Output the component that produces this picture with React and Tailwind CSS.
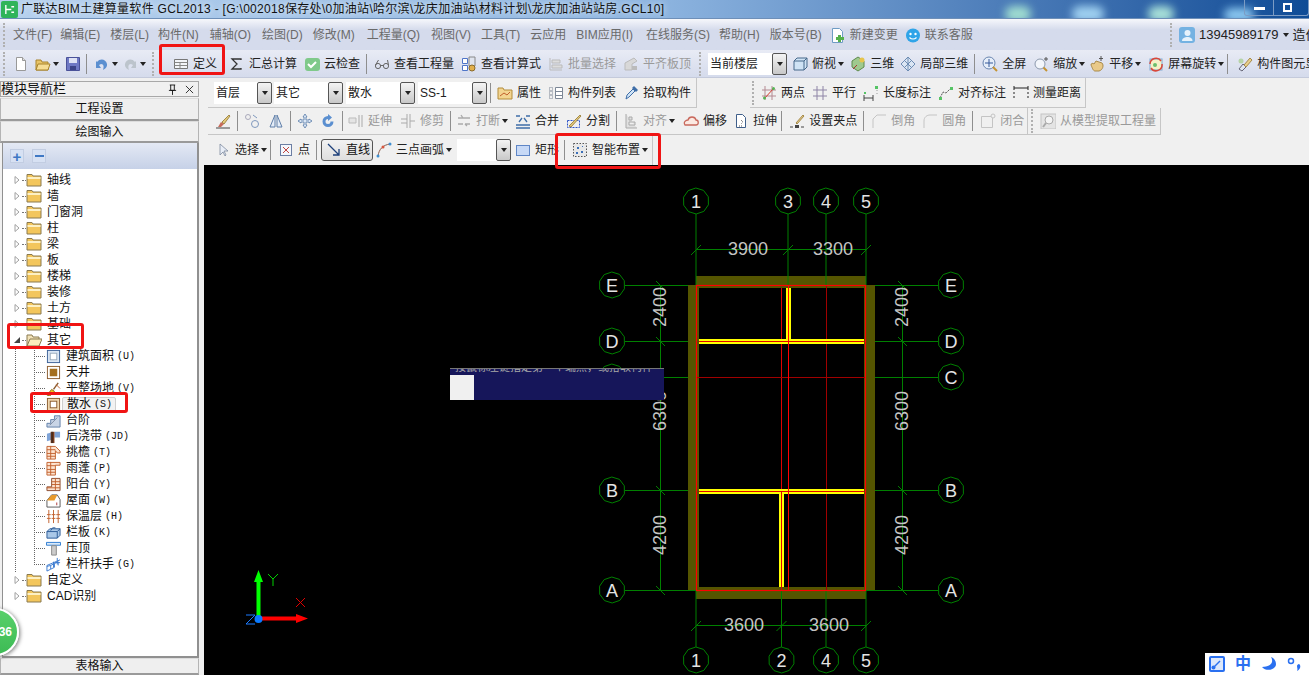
import React from 'react';

const icons = {
  doc: <><path d="M3.500 1.500h6l3 3v10h-9z" fill="#fff" stroke="#999" /><path d="M9.500 1.500v3h3" fill="#ddd" stroke="#999" /></>,
  open: <><path d="M1 4h5l1 2h6v8H1z" fill="#e8c468" stroke="#a8842c" /><path d="M3 8h12l-2 6H1z" fill="#f6dd94" stroke="#a8842c" /></>,
  save: <><path d="M1.500 1.500h13v13h-13z" fill="#6e78c4" stroke="#4a5299" /><path d="M4 2h8v5H4z" fill="#dfe3f5" /><path d="M5 10h6v4H5z" fill="#3c4488" /></>,
  undo: <path d="M3 6c3-4 9-3 10 2 .5 3-2 5-4 6 1-3 1-6-2-6l-2 1 2 3H2V5z" fill="#5b8fd0" />,
  redo: <path d="M13 6c-3-4-9-3-10 2-.5 3 2 5 4 6-1-3-1-6 2-6l2 1-2 3h5V5z" fill="#bcc4cc" />,
  define: <><path d="M1.500 3.500h13v9h-13z" fill="#f3f5fa" stroke="#777" /><path d="M1.500 6.500h13M1.500 9.500h13M7 6.500v6" stroke="#888" fill="none" /></>,
  sigma: <path d="M12 4V3H3l5 5-5 5h9v-1" fill="none" stroke="#333" strokeWidth="1.300" />,
  cloudok: <><rect x="1" y="2" width="15" height="13" rx="3" fill="#7fc98a" /><path d="M4 8l3 3 5-5" fill="none" stroke="#fff" strokeWidth="2" /></>,
  glasses: <><circle cx="4" cy="10" r="2.600" fill="none" stroke="#666" /><circle cx="12" cy="10" r="2.600" fill="none" stroke="#666" /><path d="M6.500 9.500h3M1.500 9l3-5M14.500 9l-1-5" fill="none" stroke="#666" /></>,
  calc: <><path d="M1.500 2.500h5v5h-5zM1.500 9.500h5v5h-5z" fill="#fff" stroke="#4f75c8" /><path d="M8 1h6v9H8z" fill="#dfe4ee" stroke="#888" /><circle cx="11" cy="12" r="3" fill="#e2b04c" stroke="#8a6a2a" /></>,
  batch: <><path d="M2 2v12h12" fill="none" stroke="#bbb" /><path d="M4 4h8v3H4zM4 9h10v3H4z" fill="#ddd" stroke="#bbb" /></>,
  flush: <><path d="M2 14V7l9-5 3 3-5 3v6z" fill="#d8d8d8" stroke="#bbb" /><path d="M9 10h5v4H9z" fill="#bbb" /></>,
  cube: <><path d="M2 5l3-3h10v9l-3 3H2z" fill="#cfe3f5" stroke="#46688a" /><path d="M2 5h10v9M12 5l3-3" fill="none" stroke="#46688a" /></>,
  three: <><path d="M8 1l6 4v6l-6 4-6-4V5z" fill="#9fc98e" stroke="#5e8a4c" /><circle cx="12" cy="4" r="2.500" fill="#e6c44c" /><path d="M3 13l4-4" stroke="#a33" /></>,
  part: <><path d="M8 1l7 7-7 7-7-7z" fill="#dbe6f4" stroke="#6d8cb3" /><path d="M4.500 4.500l7 7M11.500 4.500l-7 7M8 1v14" stroke="#6d8cb3" fill="none" /></>,
  full: <><circle cx="7" cy="7" r="6" fill="#e6eef9" stroke="#6a86b0" /><path d="M7 3v8M3 7h8" stroke="#35589a" /><path d="M11 11l4 4" stroke="#c49332" strokeWidth="2" /></>,
  zoom: <><circle cx="7" cy="8" r="5" fill="#f3f6fb" stroke="#8c99ad" /><path d="M10.500 11.500l3.500 3.500" stroke="#c49332" strokeWidth="2" /><path d="M13 1v4M11 3h4" stroke="#555" /></>,
  pan: <><path d="M2 9c0-2 2-2 3-1l2-3 6 2c2 2 1 7-3 8H6C4 15 3 11 2 9z" fill="#e9c988" stroke="#a98a4a" /><path d="M12 0v5M10 2.500h4" stroke="#555" /></>,
  rotate: <><rect x="2" y="3" width="12" height="11" fill="#f6f1c8" stroke="#7faad4" /><path d="M2 8a6 6 0 0 1 11-3M14 8a6 6 0 0 1-11 4" fill="none" stroke="#d9473a" strokeWidth="1.500" /><circle cx="7" cy="9" r="2" fill="#6cbf6c" /></>,
  brushb: <><path d="M3 14l3-5 3 2-3 3z" fill="#c76b5a" /><path d="M7 9l7-7 1 1-6 8z" fill="#e3c97b" stroke="#a38a4a" /><path d="M1 15h14" stroke="#444" /></>,
  prop: <><path d="M1 3h5l1 2h8v9H1z" fill="#f3d590" stroke="#b38c3b" /><path d="M3 11l4-3 3 2 3-3" stroke="#c1602d" fill="none" /></>,
  list: <><path d="M1.500 2.500h3v3h-3zM1.500 6.500h3v3h-3zM1.500 10.500h3v3h-3z" fill="none" stroke="#7c8796" strokeDasharray="1 1" /><path d="M7.500 2.500h7v11h-7zM7.500 6.500h7M7.500 10.500h7" fill="#fff" stroke="#7c8796" /></>,
  pick: <><path d="M3 14l1-4 6-6 2 2-6 6z" fill="#cfe3f6" stroke="#3f6ea8" /><path d="M9 3l2-2 4 4-2 2z" fill="#3f6ea8" /></>,
  two: <><path d="M4 1v14M11 1v14M1 5h14M1 11h14" stroke="#b48a92" fill="none" /><path d="M3 14L13 3" stroke="#d43a2c" /><circle cx="3.500" cy="13" r="1.500" fill="#55b455" /><circle cx="12.500" cy="3.500" r="1.500" fill="#55b455" /></>,
  par: <path d="M5 1v14M11 1v14M1 5h14M1 11h14" stroke="#8e84a6" fill="none" />,
  lendim: <><path d="M1 13h9M1 10v6M10 10v6" stroke="#444" fill="none" /><path d="M14 2v9" stroke="#999" strokeDasharray="1 2" /><rect x="12" y="1" width="3" height="3" fill="#55c465" /><rect x="1" y="7" width="2" height="2" fill="#55c465" /></>,
  aligndim: <><path d="M2 13l3-6 3 1 5-5" stroke="#555" fill="none" strokeDasharray="2 1" /><rect x="1" y="12" width="3" height="3" fill="#55c465" /><rect x="12" y="2" width="3" height="3" fill="#55c465" /></>,
  measure: <><path d="M1 3h14M1 1v4M15 1v4" stroke="#222" fill="none" /><path d="M1 7v8M15 7v8" stroke="#222" strokeDasharray="2 2" /></>,
  circles: <><circle cx="4" cy="4" r="2.500" fill="none" stroke="#aab" /><circle cx="11" cy="11" r="3.500" fill="none" stroke="#7f98bd" /><path d="M9 2l4 3" stroke="#7f98bd" /></>,
  mirror: <path d="M7 2L2 14h5zM9 2l5 12H9z" fill="#e4ecf7" stroke="#5f7ea8" />,
  move: <path d="M8 1l2 3H9v3h3V6l3 2-3 2V9H9v3h1l-2 3-2-3h1V9H4v1L1 8l3-2v1h3V4H6z" fill="#dbe6f4" stroke="#587ba8" strokeWidth=".8" />,
  spin: <path d="M8 3a5.500 5.500 0 1 0 5.500 5.500h-3A2.500 2.500 0 1 1 8 6v2l4-3.500L8 1z" fill="#5b8fd0" />,
  extend: <><path d="M1 5h7v5H1z" fill="#e4e4e4" stroke="#bbb" /><path d="M11 2v12M14 2v12" stroke="#aaa" /></>,
  trim: <path d="M7 1v14M10 1v14M1 6h6M1 10h6M10 8h5" stroke="#aaa" fill="none" />,
  brk: <path d="M2 5h12M2 11h5M9 11h5M5 2l2 3M11 13l-2-2" stroke="#aaa" fill="none" strokeWidth="1.300" />,
  merge: <path d="M1 12h14M1 15h14M4 9l3-4M12 9L9 5M1 3h4M11 3h4" stroke="#3f6ea8" fill="none" strokeWidth="1.300" />,
  split: <><path d="M1.500 7.500h12v7h-12z" fill="none" stroke="#2c53c8" strokeDasharray="2 1" /><path d="M3 13L14 2l1 1L5 14z" fill="#e3c97b" stroke="#a38a4a" /></>,
  align: <path d="M3 1v14h11M6 4h3v3H6zM6 9h6v3H6z" fill="#e0e0e0" stroke="#aaa" />,
  offset: <path d="M2 12c-2-3 1-5 3-5 1-4 7-4 8 0 3 0 3 5 0 5z" fill="#fbe9e2" stroke="#c8685c" strokeWidth="1.300" />,
  stretch: <><path d="M3.500 1.500h6l3 3v10h-9z" fill="#fff" stroke="#3f5f8a" /><path d="M8 7l2 2-2 2M6 13h4" stroke="#555" fill="none" strokeDasharray="1 1" /></>,
  grip: <><path d="M1 14h3M12 14h3" stroke="#444" /><rect x="6" y="12" width="4" height="3" fill="#444" /><path d="M7 10l7-8 1 1-7 8z" fill="#e9cf8a" stroke="#a58a4c" /></>,
  chamfer: <path d="M2 15V6l4-4h9" fill="none" stroke="#c4c4c4" />,
  round: <path d="M2 15V8c0-4 3-6 6-6h7" fill="none" stroke="#c4c4c4" />,
  close: <><path d="M1.500 3.500h11v11h-11z" fill="none" stroke="#c4c4c4" /><circle cx="13" cy="3" r="2" fill="#f0f0f0" stroke="#c4c4c4" /></>,
  model: <><rect x="1" y="1" width="15" height="15" fill="#e4e4e4" stroke="#c4c4c4" /><circle cx="9" cy="7" r="4" fill="#f4f4f4" stroke="#aaa" /><path d="M6 10l-3 4" stroke="#aaa" strokeWidth="2" /></>,
  arrow: <path d="M5 2v11l3-3 2 4 1-1-2-4h4z" fill="#e9eef7" stroke="#7d8aa0" strokeWidth=".8" />,
  point: <><rect x="2.500" y="2.500" width="11" height="11" fill="#f4f7fc" stroke="#6c7ea3" /><path d="M5 5l6 6M11 5l-6 6" stroke="#c0453f" /></>,
  line: <path d="M2 2l11 11M13 7v6H7" fill="none" stroke="#1c3f7a" strokeWidth="1.300" />,
  arc: <><path d="M2 14C3 7 7 3 14 2" fill="none" stroke="#8a5a4a" /><circle cx="2" cy="14" r="1.500" fill="#3f8fd0" /><circle cx="7" cy="5" r="1.500" fill="#d8563f" /><circle cx="14" cy="2" r="1.500" fill="#3f8fd0" /></>,
  rect: <rect x="1.500" y="3.500" width="13" height="10" fill="#c7d9f6" stroke="#5f86c6" />,
  smart: <><rect x="1.500" y="1.500" width="13" height="13" fill="#e8e8e8" stroke="#555" strokeDasharray="1.500 1.500" /><path d="M5 5h2v2H5zM10 4h1v1h-1zM9 9h2v2H9zM4 10h2v2H4z" fill="#3b6fb8" /></>,
  newdoc: <><path d="M3.500 1.500h7l3 3v11h-10z" fill="#fff" stroke="#6f9cc4" /><path d="M9 8h3v2h3v3h-3v2H9v-2H7v-3h2z" fill="#54b04a" /></>,
  smile: <><circle cx="8" cy="8.500" r="7" fill="#2fa4e8" /><circle cx="5.500" cy="7" r="1.200" fill="#fff" /><circle cx="10.500" cy="7" r="1.200" fill="#fff" /><path d="M4.500 10.500c2 2 5 2 7 0" stroke="#fff" fill="none" strokeWidth="1.200" /></>,
  user: <><rect x="0" y="0" width="16" height="16" rx="3" fill="#74b2e2" /><circle cx="8.500" cy="6" r="3" fill="#e6f2fb" /><path d="M3 14c0-3 3-4 5.500-4s5 1 5 4z" fill="#e6f2fb" /></>,
  element: <><path d="M2 13l4-5 3 3-4 4z" fill="#dfe5ef" stroke="#667" /><path d="M7 9l6-7 2 2-6 7z" fill="#e9cf8a" stroke="#a58a4c" /><circle cx="4" cy="5" r="2.500" fill="#b6d4a8" /></>,
  area: <><rect x="1.500" y="1.500" width="13" height="13" fill="#dbe6f4" stroke="#3a5f96" /><rect x="4.500" y="4.500" width="7" height="7" fill="#fff" stroke="#9ab" /></>,
  well: <><rect x="1.500" y="1.500" width="13" height="13" fill="#fff" stroke="#8a5a2c" /><rect x="4" y="4" width="8" height="8" fill="#a46e1e" /></>,
  level: <><path d="M1 15l5-6 3 2-5 5z" fill="#f2c21c" stroke="#8a6a10" /><path d="M8 9l5-7" stroke="#8a5a2c" strokeWidth="1.500" /><path d="M11 4l4 4" stroke="#c1602d" /></>,
  apron: <><rect x="1.500" y="1.500" width="13" height="13" fill="#f0d8b0" stroke="#8a5a2c" /><rect x="4.500" y="4.500" width="7" height="7" fill="#fff" stroke="#8a5a2c" /></>,
  step: <><path d="M1 15V11h4V7h4V3h6v12z" fill="#c8d4e6" stroke="#5f7ea8" /><path d="M4 13l8-8" stroke="#7d8aa0" /></>,
  band: <><path d="M1 5l7-2v8l-7 2zM9 3h6v6H9z" fill="#7fa4d8" /><path d="M5 3h4v12H5z" fill="#7a3a1c" /><path d="M6 3h1v12H6z" fill="#222" /></>,
  eaves: <><path d="M1 1.500h9l5 5v2h-3L10 6v9H1z" fill="#fde3cf" stroke="#c1602d" /><path d="M1 5h9M1 9h9M1 12h9M5 1v14" stroke="#c1602d" /></>,
  canopy: <><path d="M1 1.500h14v3h-5V15H1z" fill="#fde3cf" stroke="#c1602d" /><path d="M1 5h9M1 9h9M1 12h9M5 1v14" stroke="#c1602d" /></>,
  balcony: <><path d="M6 1.500h9v13H1v-4h5z" fill="#fde3cf" stroke="#8a4a2c" /><path d="M6 5h9M6 8h9M1 11.500h14M10 1v13" stroke="#c1602d" /></>,
  roof: <><path d="M1 15V8l5-6h6l3 5v8z" fill="#fff" stroke="#555" /><path d="M1 8l5-6h6l-3 6z" fill="#e89a2c" /><path d="M11 10h1v3h-1z" fill="#a33" /></>,
  insul: <path d="M3 1v14M8 1v14M13 1v14M1 6h4M6 6h4M11 6h4M1 10h4M6 10h4M11 10h4" stroke="#c1602d" fill="none" />,
  panel: <><path d="M1 7l3-3h11v7l-3 3H1z" fill="#aac8e8" stroke="#2a5a96" /><path d="M1 7h11v7M12 7l3-3M5 6l2-3h3" fill="none" stroke="#2a5a96" /></>,
  coping: <><path d="M.5 1.500h15v3H.5z" fill="#dbe9f8" stroke="#2a7ad0" /><path d="M6 5h5v10H6z" fill="#ccc" stroke="#888" /></>,
  rail: <path d="M1 15V9l14-6M1 10l4-1v4l-4 2M5 9l4-2v4l-4 2M9 7l4-2v4M12 1v7M8 5v6M15 6H9" stroke="#3a7ad0" fill="none" />,
};

const Icon = ({ name, className = 'w-4 h-4' }) => (
  <svg viewBox="0 0 16 16" className={`${className} shrink-0`}>{icons[name]}</svg>
);

const Caret = ({ className = '' }) => (
  <span className={`${className} w-0 h-0 border-x-[3.5px] border-x-transparent border-t-[4px] border-t-[#222] shrink-0`} />
);

const Tool = ({ icon, label, caret, dim, className = 'ml-[7px]' }) => (
  <div className={`${className} flex items-center gap-1 shrink-0 ${dim ? 'text-[#9a9a9a]' : 'text-[#222]'}`}>
    <Icon name={icon} />
    {label && <span className="whitespace-nowrap">{label}</span>}
    {caret && <Caret className="-ml-[2px]" />}
  </div>
);

const Sep = ({ className = 'ml-[6px]' }) => <div className={`${className} w-px h-[20px] bg-[#8e8e8e] shrink-0`} />;

const Grip = ({ className = '' }) => <div className={`${className} h-[24px] border-l-2 border-dotted border-[#b0b0b0] shrink-0`} />;

const Select = ({ label, className }) => (
  <div className={`${className} h-[22px] flex bg-white shrink-0`}>
    <span className="flex-1 pl-[2px] text-[12px] leading-[22px] text-[#222] whitespace-nowrap">{label}</span>
    <span className="w-[15px] flex items-center justify-center border border-[#555] rounded-[2px] bg-gradient-to-b from-[#f4f4f4] to-[#c8c8c8]">
      <Caret />
    </span>
  </div>
);

const SideButton = ({ children, className = '' }) => (
  <div className={`${className} flex items-center justify-center bg-[#efefef] border-x border-b-2 border-t border-x-[#b4b4b4] border-t-[#dcdcdc] border-b-[#9a9a9a] text-[12px] text-[#111]`}>
    {children}
  </div>
);

const folders = ['轴线', '墙', '门窗洞', '柱', '梁', '板', '楼梯', '装修', '土方', '基础'];

const leaves = [
  ['area', '建筑面积', '(U)'],
  ['well', '天井', ''],
  ['level', '平整场地', '(V)'],
  ['apron', '散水', '(S)'],
  ['step', '台阶', ''],
  ['band', '后浇带', '(JD)'],
  ['eaves', '挑檐', '(T)'],
  ['canopy', '雨蓬', '(P)'],
  ['balcony', '阳台', '(Y)'],
  ['roof', '屋面', '(W)'],
  ['insul', '保温层', '(H)'],
  ['panel', '栏板', '(K)'],
  ['coping', '压顶', ''],
  ['rail', '栏杆扶手', '(G)'],
];

const Folder = ({ open }) => (
  <svg viewBox="0 0 16 16" className="w-4 h-4 shrink-0">
    {open ? (
      <>
        <path d="M1 3h5l1 2h6v9H1z" fill="#f2e2b8" stroke="#8a7a50" />
        <path d="M4 7h12l-3 7H1z" fill="#fbeebd" stroke="#8a7a50" />
      </>
    ) : (
      <>
        <path d="M1 2.500h5l1 1.500h8v10H1z" fill="#f3c65c" stroke="#8a7a50" />
        <path d="M1.500 5h13v2h-13z" fill="#fdf0c4" />
      </>
    )}
  </svg>
);

const FolderRow = ({ label, open }) => (
  <div className="h-4 flex items-center text-[12px] text-[#111]">
    <span className="w-[10px] flex justify-center shrink-0">
      {open ? (
        <svg viewBox="0 0 8 8" className="w-2 h-2"><path d="M7 1v6H1z" fill="#444" /></svg>
      ) : (
        <svg viewBox="0 0 8 8" className="w-2 h-2"><path d="M2 .5l4 3.500-4 3.500z" fill="#fff" stroke="#a0a0a0" /></svg>
      )}
    </span>
    <span className="w-[4px] border-t border-dotted border-[#777] shrink-0" />
    <Folder open={open} />
    <span className="ml-[5px] whitespace-nowrap">{label}</span>
  </div>
);

const LeafRow = ({ icon, label, hot, last }) => (
  <div className="h-4 flex items-center text-[12px] text-[#111]">
    <svg viewBox="0 0 12 16" className="w-[12px] h-4 shrink-0">
      <path d={last ? 'M.5 0V8M0 8.500H12' : 'M.5 0V16M0 8.500H12'} stroke="#666" strokeDasharray="1 1" fill="none" />
    </svg>
    <Icon name={icon} className="w-[15px] h-[15px]" />
    <span className={`ml-[1px] flex items-center gap-[3px] h-[15px] pl-1 pr-[3px] whitespace-nowrap rounded-[2px] ${label === '散水' ? 'bg-[#f2f2f2] border border-[#cfcfcf]' : ''}`}>
      {label}
      {hot && <span className="text-[10px] [font-family:'Liberation_Mono',monospace]">{hot}</span>}
    </span>
  </div>
);

const Nav = () => (
  <aside className="w-[204px] shrink-0 flex flex-col pr-[5px] pt-[3px]">
    <div className="h-[16px] flex items-center justify-between border border-[#a8a8a8] pr-[4px] text-[13px] text-[#111]">
      <span className="whitespace-nowrap">模块导航栏</span>
      <span className="flex items-center gap-[8px]">
        <svg viewBox="0 0 10 12" className="w-[9px] h-[11px]"><path d="M2 1h6M3 1v6h4V1M1 7h8M5 7v5" stroke="#111" fill="none" /></svg>
        <svg viewBox="0 0 10 10" className="w-[9px] h-[9px]"><path d="M1 1l8 8M9 1l-8 8" stroke="#222" /></svg>
      </span>
    </div>
    <SideButton className="mt-px h-[23px]">工程设置</SideButton>
    <SideButton className="h-[22px]">绘图输入</SideButton>
    <div className="ml-[2px] flex-1 min-h-0 flex flex-col border-r-2 border-b-2 border-l border-[#909090] bg-white">
      <div className="h-[26px] flex items-center gap-2 pl-[7px] bg-gradient-to-b from-[#e4e9f4] to-[#c6d1e7] shrink-0">
        <span className="w-[14px] h-[14px] flex items-center justify-center bg-[#d7e1f3] border border-[#c2cde2] text-[#3f78c4] font-bold text-[15px] leading-none">+</span>
        <span className="w-[14px] h-[14px] flex items-center justify-center bg-[#d7e1f3] border border-[#c2cde2]"><span className="w-[9px] h-[2px] bg-[#3f78c4]" /></span>
      </div>
      <div className="pt-[3px] pl-[9px]">
        {folders.map((f) => <FolderRow key={f} label={f} />)}
        <FolderRow label="其它" open />
        <div className="ml-[3px] border-l border-dotted border-[#666] pl-[18px]">
          {leaves.map(([icon, label, hot], i) => (
            <LeafRow key={label} icon={icon} label={label} hot={hot} last={i === leaves.length - 1} />
          ))}
        </div>
        <FolderRow label="自定义" />
        <FolderRow label="CAD识别" />
      </div>
    </div>
    <SideButton className="h-[17px] shrink-0">表格输入</SideButton>
  </aside>
);

const Bubble = ({ x, y, t }) => {
  const pts = Array.from({ length: 10 }, (_, i) => {
    const a = (i / 10) * Math.PI * 2 + 0.3;
    return `${x + 13 * Math.cos(a)},${y + 13 * Math.sin(a)}`;
  }).join(' ');
  return (
    <g>
      <polygon points={pts} fill="none" stroke="#008000" />
      {t && <text x={x} y={y + 1} textAnchor="middle" dominantBaseline="central" fontSize="18" fill="#e4e4e4">{t}</text>}
    </g>
  );
};

const Dim = ({ x, y, t, v }) => (
  <text
    x={x}
    y={y}
    textAnchor="middle"
    dominantBaseline="central"
    fontSize="18"
    fill="#c4c4c4"
    transform={v ? `rotate(-90 ${x} ${y})` : undefined}
  >
    {t}
  </text>
);

const Drawing = () => (
  <svg viewBox="204 165 1105 510" className="w-full h-full block [font-family:'Liberation_Sans',sans-serif]">
    {/* walls */}
    <path d="M696 276h170v12H696zM696 587h170v12H696zM688 285h11v305h-11zM864 285h11v305h-11z" fill="#555500" />
    {/* grid */}
    <path d="M696 214V285M788 214V285M826 214V285M866 214V285M696 590V647M781.500 590V647M826 590V647M866 590V647" stroke="#008000" />
    <path d="M625 285.500H688M625 341.500H688M664 377.500H688M625 490.500H688M625 590.500H696M875 285.500H938M875 341.500H938M875 377.500H938M875 490.500H938M866 590.500H938" stroke="#008000" />
    <path d="M696 249.500H866M696 625.500H866M660.500 285V590M902.500 285V590" stroke="#008000" />
    <path d="M691 255l10-10M783 255l10-10M861 255l10-10M691 631l10-10M776.500 631l10-10M861 631l10-10" stroke="#008000" />
    <path d="M656 281l9 9M656 337l9 9M656 486l9 9M656 586l9 9M898 281l9 9M898 337l9 9M898 486l9 9M898 586l9 9" stroke="#008000" />
    {/* inner axes */}
    <path d="M781.500 288V590" stroke="#e00000" />
    <path d="M826.500 285V590M696 377.500H866" stroke="#a00000" />
    {/* yellow walls */}
    <path d="M699 339h165v5H699zM786 288h5v52h-5zM699 489h165v5H699zM779 492h5v95h-5z" fill="#ffff00" />
    <path d="M699 341.500H864M788.500 288V341M699 491.500H864M781.500 492V587" stroke="#e00000" />
    <path d="M788.500 285V590" stroke="#ff0000" />
    <rect x="696.500" y="285.500" width="169" height="305" fill="none" stroke="#ff0000" strokeWidth="1.200" />
    {/* axis bubbles */}
    {[[696, '1'], [788, '3'], [826, '4'], [866, '5']].map(([x, t]) => <Bubble key={t} x={x} y={201} t={t} />)}
    {[[696, '1'], [781.500, '2'], [826, '4'], [866, '5']].map(([x, t]) => <Bubble key={t} x={x} y={660} t={t} />)}
    {[[285, 'E'], [341, 'D'], [377, 'C'], [490, 'B'], [590, 'A']].map(([y, t]) => (
      <g key={t}>
        {/* left C sits under the prompt box, only its top edge shows */}
        <Bubble x={612} y={y} t={t === 'C' ? '' : t} />
        <Bubble x={951} y={y} t={t} />
      </g>
    ))}
    {/* dimensions */}
    <Dim x={748} y={249} t="3900" />
    <Dim x={833} y={249} t="3300" />
    <Dim x={744} y={625} t="3600" />
    <Dim x={829} y={625} t="3600" />
    <Dim x={660} y={307} t="2400" v />
    <Dim x={902} y={307} t="2400" v />
    <Dim x={660} y={411} t="6300" v />
    <Dim x={902} y={411} t="6300" v />
    <Dim x={660} y={535} t="4200" v />
    <Dim x={902} y={535} t="4200" v />
    {/* axis gizmo */}
    <path d="M256.500 619V582h-2.500l4.500-12 4.500 12h-2.500v37z" fill="#00ff00" />
    <path d="M258 616.500h38v-2.500l12 4.500-12 4.500v-2.500h-38z" fill="#ff0000" />
    <circle cx="258.500" cy="619" r="4" fill="#0a7aff" />
    <path d="M268 574l5 5 5-5M273 579v7" stroke="#00d000" fill="none" />
    <path d="M296 598l9 9M305 598l-9 9" stroke="#e00000" />
    <path d="M246 615h9l-9 9h9" stroke="#1a7aff" fill="none" />
  </svg>
);

export default function App() {
  return (
    <div className="relative w-[1309px] h-[675px] overflow-hidden flex flex-col bg-[#f0f0f0] text-[12px] [font-family:'Liberation_Sans','Noto_Sans_CJK_SC',sans-serif]">
      {/* title bar */}
      <header className="relative h-[19px] shrink-0 flex items-center overflow-hidden border-b border-[#6e8fb8] bg-gradient-to-r from-[#b6d1ee] via-[#8eb5e0] via-50% to-[#0e4c96]">
        <span className="absolute left-[1005px] top-[6px] w-[26px] h-[16px] rounded-full bg-[#9fdcd0] blur-[4px]" />
        <span className="absolute left-[1072px] top-[6px] w-[32px] h-[16px] rounded-full bg-[#9fd0f0] blur-[4px]" />
        <span className="absolute left-[1148px] top-[6px] w-[26px] h-[16px] rounded-full bg-[#a8e0d8] blur-[4px]" />
        <span className="absolute left-[1224px] top-[8px] w-[30px] h-[14px] rounded-full bg-[#8cc8f0] blur-[4px]" />
        <span className="w-[17px] h-[17px] ml-[1px] flex items-center justify-center rounded-[2px] bg-[#2fb45a] shrink-0">
          <svg viewBox="0 0 12 12" className="w-[11px] h-[11px]"><path d="M2 1v10M2 6h6M8 3h3M8 9h3" stroke="#fff" fill="none" strokeWidth="1.500" /></svg>
        </span>
        <span className="relative ml-[3px] text-[12px] tracking-[0.3px] text-[#111] whitespace-nowrap [text-shadow:0_0_6px_#fff]">
          广联达BIM土建算量软件 GCL2013 - [G:\002018保存处\0加油站\哈尔滨\龙庆加油站\材料计划\龙庆加油站站房.GCL10]
        </span>
        <div className="relative ml-auto h-[16px] -mt-[3px] flex border-x border-b border-[#7c9cc4] rounded-b-[3px] pr-[8px]">
          <span className="w-[29px] flex items-center justify-center border-r border-[#7c9cc4]"><span className="w-[11px] h-[3px] mt-[2px] bg-white" /></span>
          <span className="w-[26px] flex items-center justify-center">
            <span className="w-[9px] h-[9px] border-2 border-white" />
          </span>
        </div>
      </header>

      {/* menu */}
      <div className="h-[31px] shrink-0 flex items-center bg-gradient-to-b from-[#f6f7fb] via-[#d5dbec] via-35% to-[#d5dbec] pl-[3px] text-[#6a6a6a]">
        <Grip />
        <div className="ml-[8px] flex items-center gap-[9px] whitespace-nowrap">
          <span>文件(F)</span>
          <span className="-ml-px">编辑(E)</span>
          <span className="ml-px">楼层(L)</span>
          <span>构件(N)</span>
          <span className="ml-[2px]">辅轴(O)</span>
          <span className="ml-[2px]">绘图(D)</span>
          <span className="ml-px">修改(M)</span>
          <span className="ml-[3px]">工程量(Q)</span>
          <span className="ml-[2px]">视图(V)</span>
          <span className="ml-px">工具(T)</span>
          <span className="ml-px">云应用</span>
          <span className="ml-px">BIM应用(I)</span>
          <span className="ml-[4px]">在线服务(S)</span>
          <span>帮助(H)</span>
          <span className="ml-px">版本号(B)</span>
        </div>
        <div className="ml-[7px] flex items-center gap-[5px] whitespace-nowrap"><Icon name="newdoc" /><span>新建变更</span></div>
        <div className="ml-[7px] flex items-center gap-[4px] whitespace-nowrap"><Icon name="smile" /><span>联系客服</span></div>
        <Grip className="ml-auto" />
        <div className="ml-[7px] w-[130px] flex items-center gap-[4px] overflow-hidden whitespace-nowrap text-[#222] text-[13px]">
          <Icon name="user" />
          <span>13945989179</span>
          <Caret />
          <span>造价</span>
        </div>
      </div>

      {/* main toolbar */}
      <div className="h-[28px] shrink-0 flex items-center overflow-hidden border-b border-[#c4cadb] bg-gradient-to-b from-[#e8ebf5] to-[#d5dbec] pl-[3px]">
        <Grip />
        <Tool icon="doc" className="ml-[8px]" />
        <Tool icon="open" className="ml-[6px]" caret />
        <Tool icon="save" className="ml-[6px]" />
        <Sep className="ml-[5px]" />
        <Tool icon="undo" caret className="ml-[7px]" />
        <Tool icon="redo" caret className="ml-[4px]" />
        <Grip className="ml-[6px]" />
        <Tool icon="define" label="定义" className="ml-[19px]" />
        <Tool icon="sigma" label="汇总计算" className="ml-[12px]" />
        <Tool icon="cloudok" label="云检查" />
        <Sep />
        <Tool icon="glasses" label="查看工程量" />
        <Tool icon="calc" label="查看计算式" />
        <Tool icon="batch" label="批量选择" dim />
        <Tool icon="flush" label="平齐板顶" dim />
        <Grip className="ml-[8px]" />
        <Select label="当前楼层" className="ml-[7px] w-[79px]" />
        <Tool icon="cube" label="俯视" caret className="ml-[5px]" />
        <Tool icon="three" label="三维" className="ml-[6px]" />
        <Tool icon="part" label="局部三维" className="ml-[6px]" />
        <Sep />
        <Tool icon="full" label="全屏" />
        <Tool icon="zoom" label="缩放" caret />
        <Tool icon="pan" label="平移" caret className="ml-[4px]" />
        <Tool icon="rotate" label="屏幕旋转" caret className="ml-[7px]" />
        <Sep className="ml-[3px]" />
        <Tool icon="element" label="构件图元显示" className="ml-[9px]" />
      </div>

      <div className="relative flex-1 min-h-0 flex">
        <Nav />
        <main className="flex-1 min-w-0 flex flex-col">
          <div className="h-[30px] shrink-0 flex">
            <div className="ml-[4px] w-[489px] flex items-center pl-[6px] border-r border-b border-[#c6c6c6]">
              <Select label="首层" className="w-[58px]" />
              <Select label="其它" className="ml-[2px] w-[69px]" />
              <Select label="散水" className="ml-[3px] w-[69px]" />
              <Select label="SS-1" className="ml-[3px] w-[69px]" />
              <Sep className="ml-[3px]" />
              <Tool icon="prop" label="属性" className="ml-[6px]" />
              <Tool icon="list" label="构件列表" />
              <Tool icon="pick" label="拾取构件" />
            </div>
            <div className="ml-[53px] w-[336px] flex items-center border-r border-b border-[#c6c6c6]">
              <Grip className="ml-[2px]" />
              <Tool icon="two" label="两点" />
              <Tool icon="par" label="平行" />
              <Tool icon="lendim" label="长度标注" />
              <Tool icon="aligndim" label="对齐标注" />
              <Tool icon="measure" label="测量距离" />
            </div>
          </div>
          <div className="h-[27px] shrink-0 flex">
            <div className="ml-[4px] w-[820px] flex items-center pl-[7px] border-r border-b border-[#c6c6c6]">
              <Tool icon="brushb" className="" />
              <Sep />
              <Tool icon="circles" className="ml-[6px]" />
              <Tool icon="mirror" className="ml-[8px]" />
              <Sep />
              <Tool icon="move" className="ml-[6px]" />
              <Tool icon="spin" className="ml-[7px]" />
              <Sep />
              <Tool icon="extend" label="延伸" dim className="ml-[5px]" />
              <Tool icon="trim" label="修剪" dim className="ml-[8px]" />
              <Sep />
              <Tool icon="brk" label="打断" dim caret className="ml-[5px]" />
              <Tool icon="merge" label="合并" />
              <Tool icon="split" label="分割" />
              <Sep />
              <Tool icon="align" label="对齐" dim caret className="ml-[6px]" />
              <Tool icon="offset" label="偏移" className="ml-[8px]" />
              <Tool icon="stretch" label="拉伸" className="ml-[6px]" />
              <Sep className="ml-[4px]" />
              <Tool icon="grip" label="设置夹点" />
              <Sep />
              <Tool icon="chamfer" label="倒角" dim />
              <Tool icon="round" label="圆角" dim />
              <Sep />
              <Tool icon="close" label="闭合" dim />
            </div>
            <div className="w-[133px] flex items-center border-r border-b border-[#c6c6c6]">
              <Grip className="ml-[3px]" />
              <Tool icon="model" label="从模型提取工程量" dim />
            </div>
          </div>
          <div className="h-[30px] shrink-0 flex">
            <div className="ml-[4px] w-[445px] flex items-center pl-[7px] border-r border-[#c6c6c6]">
              <Tool icon="arrow" label="选择" caret className="" />
              <Sep className="ml-[3px]" />
              <Tool icon="point" label="点" className="ml-[7px]" />
              <Sep />
              <div className="ml-[4px] h-[22px] w-[52px] pl-[4px] flex items-center gap-1 shrink-0 rounded-[3px] border border-[#555] bg-gradient-to-b from-[#f2f2f2] to-[#dedede] text-[#111]">
                <Icon name="line" />
                <span>直线</span>
              </div>
              <Tool icon="arc" label="三点画弧" caret className="ml-[3px]" />
              <Select label="" className="ml-[5px] w-[54px]" />
              <Tool icon="rect" label="矩形" className="ml-[4px]" />
              <Sep className="ml-[5px]" />
              <Tool icon="smart" label="智能布置" caret className="ml-[7px]" />
            </div>
          </div>

          {/* canvas */}
          <div className="relative flex-1 min-h-0 bg-black">
            <Drawing />
            <div className="absolute left-[246px] top-[203px] w-[214px] h-[32px] bg-[#16165a] border-t border-[#777]">
              <div className="h-[6px] overflow-hidden text-[#a8a8a8] text-[11px] leading-[11px] pl-[5px]">
                <div className="-mt-[7px] whitespace-nowrap">按鼠标左键指定第一个端点，或拾取构件</div>
              </div>
              <div className="w-[24px] h-[25px] bg-[#f0f0f0]" />
            </div>
            <div className="absolute right-0 bottom-0 w-[104px] h-[22px] flex items-center gap-[10px] pl-[4px] bg-white text-[#2a70f0]">
              <svg viewBox="0 0 16 16" className="w-4 h-4"><rect x="1" y="1" width="14" height="14" rx="1" fill="#dde8fb" stroke="#2a70f0" strokeWidth="2" /><path d="M4 12l7-7" stroke="#2a70f0" strokeWidth="1.500" /><circle cx="4.500" cy="11.500" r="2" fill="#2a70f0" /></svg>
              <span className="text-[16px] font-bold leading-none">中</span>
              <svg viewBox="0 0 16 16" className="w-4 h-4"><path d="M10 1c3 5 0 10-9 10 4 5 14 3 14-3 0-3-2-6-5-7z" fill="#2a70f0" /></svg>
              <svg viewBox="0 0 16 16" className="w-4 h-4"><circle cx="4" cy="5" r="2.500" fill="none" stroke="#2a70f0" strokeWidth="1.500" /><path d="M12 8c2 1 2 5-2 7 1-2 0-3 0-5 0-1 1-2 2-2z" fill="#2a70f0" /></svg>
            </div>
          </div>
        </main>

        {/* floating badge */}
        <div className="absolute left-[-29px] top-[530px] w-[48px] h-[48px] rounded-full flex items-center justify-end pr-[5px] bg-gradient-to-b from-[#58d06a] to-[#3dbb55] border-2 border-white shadow-[1px_1px_4px_#777] text-white font-bold text-[12px]">36</div>
      </div>

      {/* red callouts */}
      <div className="absolute left-[159px] top-[44px] w-[66px] h-[31px] border-[3px] border-[#f01414] rounded-[3px]" />
      <div className="absolute left-[555px] top-[133px] w-[106px] h-[36px] border-[3px] border-[#f01414] rounded-[3px]" />
      <div className="absolute left-[7px] top-[323px] w-[77px] h-[26px] border-[3px] border-[#f01414] rounded-[3px]" />
      <div className="absolute left-[30px] top-[392px] w-[98px] h-[21px] border-[3px] border-[#f01414] rounded-[3px]" />
    </div>
  );
}
